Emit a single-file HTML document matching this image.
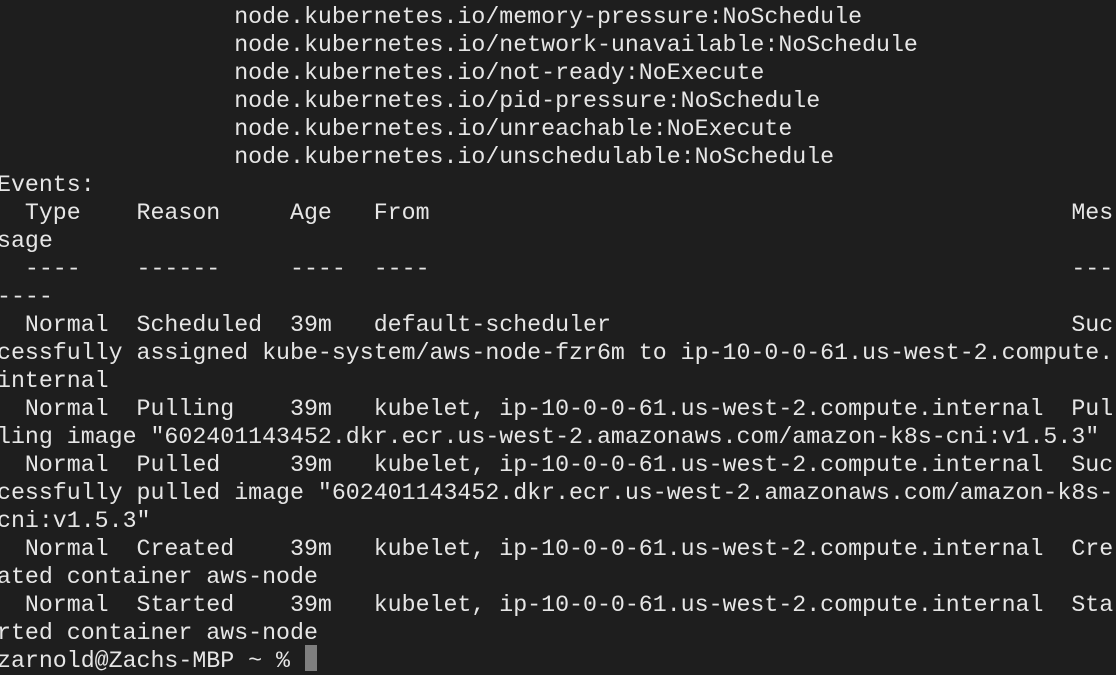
<!DOCTYPE html>
<html><head><style>
html,body{margin:0;padding:0;background:#1e1e1e;width:1116px;height:671px;overflow:hidden}
pre{position:absolute;left:-3px;top:3px;margin:0;font-family:"Liberation Mono",monospace;font-size:23.25px;line-height:28px;color:#e6e6e6;white-space:pre}
.cur{position:absolute;left:305px;top:645px;width:12px;height:26px;background:#7f7f7f}
</style></head><body>
<pre>                 node.kubernetes.io/memory-pressure:NoSchedule
                 node.kubernetes.io/network-unavailable:NoSchedule
                 node.kubernetes.io/not-ready:NoExecute
                 node.kubernetes.io/pid-pressure:NoSchedule
                 node.kubernetes.io/unreachable:NoExecute
                 node.kubernetes.io/unschedulable:NoSchedule
Events:
  Type    Reason     Age   From                                              Mes
sage
  ----    ------     ----  ----                                              ---
----
  Normal  Scheduled  39m   default-scheduler                                 Suc
cessfully assigned kube-system/aws-node-fzr6m to ip-10-0-0-61.us-west-2.compute.
internal
  Normal  Pulling    39m   kubelet, ip-10-0-0-61.us-west-2.compute.internal  Pul
ling image "602401143452.dkr.ecr.us-west-2.amazonaws.com/amazon-k8s-cni:v1.5.3"
  Normal  Pulled     39m   kubelet, ip-10-0-0-61.us-west-2.compute.internal  Suc
cessfully pulled image "602401143452.dkr.ecr.us-west-2.amazonaws.com/amazon-k8s-
cni:v1.5.3"
  Normal  Created    39m   kubelet, ip-10-0-0-61.us-west-2.compute.internal  Cre
ated container aws-node
  Normal  Started    39m   kubelet, ip-10-0-0-61.us-west-2.compute.internal  Sta
rted container aws-node
zarnold@Zachs-MBP ~ % </pre>
<div class="cur"></div>
</body></html>
